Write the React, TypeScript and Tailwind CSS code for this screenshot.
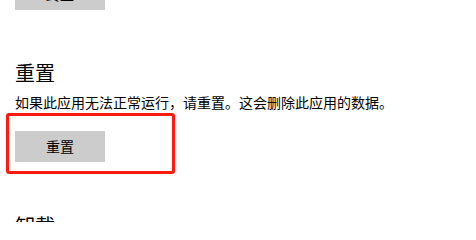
import React from "react";

export default function App() {
  return (
    <div
      className="relative w-[476px] h-[222px] overflow-hidden bg-white pl-[15px] text-black"
      style={{ fontFamily: '"Noto Sans CJK SC", "Noto Sans", sans-serif' }}
    >
      <div className="mt-[-22px] flex h-[32px] w-[90px] items-center justify-center bg-[#cccccc] text-[14px]">
        终止
      </div>
      <div className="mt-[49px] text-[20px] leading-[28px]">重置</div>
      <div className="mt-[5px] text-[14px] leading-[20px]">
        如果此应用无法正常运行，请重置。这会删除此应用的数据。
      </div>
      <div className="mt-[19px] flex h-[31px] w-[90px] items-center justify-center bg-[#cccccc] text-[14px]">
        重置
      </div>
      <div className="mt-[50px] text-[20px] leading-[28px]">卸载</div>
      <div className="pointer-events-none absolute left-[6px] top-[113px] h-[61px] w-[169px] rounded-[3px] border-[3px] border-[#ff1a10]" />
    </div>
  );
}
